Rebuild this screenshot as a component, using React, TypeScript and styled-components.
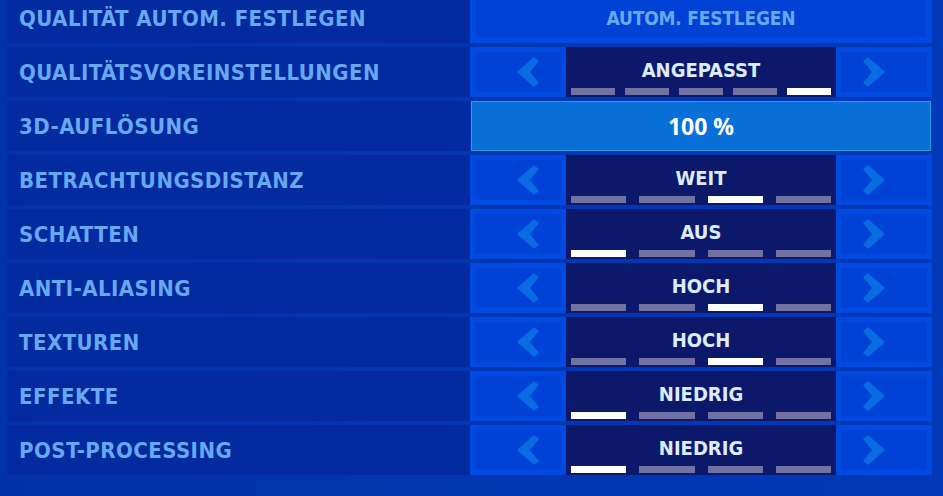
import React from "react";
import styled, { createGlobalStyle } from "styled-components";

const Global = createGlobalStyle`
  html, body { margin: 0; padding: 0; }
  body {
    width: 943px;
    height: 496px;
    overflow: hidden;
    background: linear-gradient(90deg, #0232a8 0%, #0236b2 60%, #0239b8 100%);
  }
`;

const LABEL_FONT = `"DejaVu Sans Condensed", "DejaVu Sans", sans-serif`;

const Page = styled.div`
  display: flex;
  flex-direction: column;
  gap: 4px;
  margin-top: -7px;
  padding: 0 11px 0 7px;
`;

const Row = styled.div`
  display: grid;
  grid-template-columns: 1fr 462px;
  height: 50px;
`;

const Label = styled.div`
  display: flex;
  align-items: center;
  padding-left: 12px;
  background: #032a9f;
  color: #68a8f0;
  font-family: ${LABEL_FONT};
  font-weight: 700;
  font-size: 22px;
  letter-spacing: 0.45px;
  white-space: nowrap;
`;

const FullButton = styled.div`
  display: flex;
  align-items: center;
  justify-content: center;
  background: #0042d6;
  box-shadow: inset 0 0 0 6px #004ae2;
  color: #68a8f0;
  font-family: ${LABEL_FONT};
  font-weight: 700;
  font-size: 19px;
  letter-spacing: -0.2px;
  white-space: nowrap;
`;

const SliderCell = styled.div`
  display: flex;
  padding: 0 1px;
`;

const SliderBar = styled.div`
  flex: 1;
  display: flex;
  align-items: center;
  justify-content: center;
  background: #0870d8;
  border: 1px solid #2e9cd6;
  color: #ffffff;
  font-family: "Open Sans", sans-serif;
  font-weight: 700;
  font-size: 23px;
`;

const Selector = styled.div`
  display: grid;
  grid-template-columns: 96px 1fr 96px;
`;

const ArrowBox = styled.div<{ $side: "left" | "right" }>`
  display: flex;
  align-items: center;
  justify-content: ${(p) => (p.$side === "left" ? "flex-end" : "flex-start")};
  padding: ${(p) => (p.$side === "left" ? "0 27px 0 0" : "0 0 0 27px")};
  background: #0042d6;
  box-shadow: inset 0 0 0 5px #004ae2;
`;

const Center = styled.div`
  display: flex;
  flex-direction: column;
  justify-content: space-between;
  padding: 13px 5px 2px;
  background: #0c196a;
`;

const Value = styled.div`
  text-align: center;
  line-height: 20px;
  color: #dcecfc;
  font-family: ${LABEL_FONT};
  font-weight: 700;
  font-size: 20px;
  white-space: nowrap;
`;

const Ticks = styled.div<{ $count: number }>`
  display: grid;
  grid-template-columns: repeat(${(p) => p.$count}, 1fr);
  gap: ${(p) => (p.$count === 5 ? 10 : 13)}px;
  height: 7px;
`;

const Tick = styled.div<{ $on: boolean }>`
  background: ${(p) => (p.$on ? "#ffffff" : "#7272a2")};
`;

const Arrow = ({ dir }: { dir: "left" | "right" }) => (
  <svg width="22" height="30" viewBox="0 0 22 30">
    <polygon
      points={
        dir === "left"
          ? "1,15 17,1 21,4 12,15 21,26 17,29"
          : "21,15 5,1 1,4 10,15 1,26 5,29"
      }
      fill="#0a6ce2"
      stroke="#0a6ce2"
      strokeWidth="1.5"
      strokeLinejoin="round"
    />
  </svg>
);

type RowData =
  | { label: string; kind: "button"; value: string }
  | { label: string; kind: "slider"; value: string }
  | { label: string; kind: "select"; value: string; count: number; active: number };

const rows: RowData[] = [
  { label: "QUALITÄT AUTOM. FESTLEGEN", kind: "button", value: "AUTOM. FESTLEGEN" },
  { label: "QUALITÄTSVOREINSTELLUNGEN", kind: "select", value: "ANGEPASST", count: 5, active: 4 },
  { label: "3D-AUFLÖSUNG", kind: "slider", value: "100 %" },
  { label: "BETRACHTUNGSDISTANZ", kind: "select", value: "WEIT", count: 4, active: 2 },
  { label: "SCHATTEN", kind: "select", value: "AUS", count: 4, active: 0 },
  { label: "ANTI-ALIASING", kind: "select", value: "HOCH", count: 4, active: 2 },
  { label: "TEXTUREN", kind: "select", value: "HOCH", count: 4, active: 2 },
  { label: "EFFEKTE", kind: "select", value: "NIEDRIG", count: 4, active: 0 },
  { label: "POST-PROCESSING", kind: "select", value: "NIEDRIG", count: 4, active: 0 },
];

export default function App() {
  return (
    <>
      <Global />
      <Page>
        {rows.map((r) => (
          <Row key={r.label}>
            <Label>{r.label}</Label>
            {r.kind === "button" && <FullButton>{r.value}</FullButton>}
            {r.kind === "slider" && (
              <SliderCell>
                <SliderBar>{r.value}</SliderBar>
              </SliderCell>
            )}
            {r.kind === "select" && (
              <Selector>
                <ArrowBox $side="left">
                  <Arrow dir="left" />
                </ArrowBox>
                <Center>
                  <Value>{r.value}</Value>
                  <Ticks $count={r.count}>
                    {Array.from({ length: r.count }).map((_, i) => (
                      <Tick key={i} $on={i === r.active} />
                    ))}
                  </Ticks>
                </Center>
                <ArrowBox $side="right">
                  <Arrow dir="right" />
                </ArrowBox>
              </Selector>
            )}
          </Row>
        ))}
      </Page>
    </>
  );
}
